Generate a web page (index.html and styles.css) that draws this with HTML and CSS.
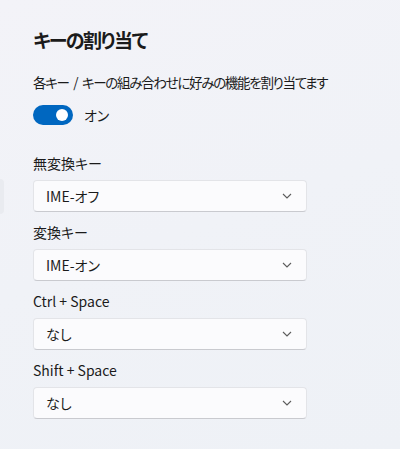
FILE: index.html
```html
<!DOCTYPE html>
<html lang="ja">
<head>
<meta charset="utf-8">
<link rel="stylesheet" href="styles.css">
</head>
<body>
<div class="nav-edge"></div>
<main class="page">
  <h1 class="title">キーの割り当て</h1>
  <p class="desc">各キー / キーの組み合わせに好みの機能を割り当てます</p>
  <div class="toggle-row">
    <span class="toggle"><span class="knob"></span></span>
    <span class="toggle-label">オン</span>
  </div>
  <div class="fields">
    <div class="field">
      <div class="label">無変換キー</div>
      <div class="combo"><span>IME-オフ</span><svg class="chev" width="10" height="6" viewBox="0 0 10 6"><path d="M1 1 L5 5 L9 1" fill="none" stroke="#5c5c5c" stroke-width="1.1"/></svg></div>
    </div>
    <div class="field">
      <div class="label">変換キー</div>
      <div class="combo"><span>IME-オン</span><svg class="chev" width="10" height="6" viewBox="0 0 10 6"><path d="M1 1 L5 5 L9 1" fill="none" stroke="#5c5c5c" stroke-width="1.1"/></svg></div>
    </div>
    <div class="field">
      <div class="label">Ctrl + Space</div>
      <div class="combo"><span>なし</span><svg class="chev" width="10" height="6" viewBox="0 0 10 6"><path d="M1 1 L5 5 L9 1" fill="none" stroke="#5c5c5c" stroke-width="1.1"/></svg></div>
    </div>
    <div class="field">
      <div class="label">Shift + Space</div>
      <div class="combo"><span>なし</span><svg class="chev" width="10" height="6" viewBox="0 0 10 6"><path d="M1 1 L5 5 L9 1" fill="none" stroke="#5c5c5c" stroke-width="1.1"/></svg></div>
    </div>
  </div>
</main>
</body>
</html>
```
FILE: styles.css
```css
html, body {
  margin: 0;
  height: 100%;
}
body {
  background: linear-gradient(160deg, #f3f3f8 0%, #f0f2f7 50%, #eef1f6 100%);
  font-family: "Noto Sans CJK JP", "Noto Sans", sans-serif;
  font-feature-settings: "palt";
  color: #1b1b1b;
  position: relative;
  overflow: hidden;
}
.nav-edge {
  position: absolute;
  left: -6px;
  top: 179px;
  width: 10px;
  height: 35px;
  border-radius: 4px;
  background: #e9ebf0;
}
.page {
  padding: 26px 0 0 33px;
}
.title {
  margin: 0;
  font-size: 19px;
  line-height: 28px;
  font-weight: 700;
  letter-spacing: -1.5px;
}
.desc {
  margin: 18px 0 0;
  font-size: 13.5px;
  line-height: 20px;
  letter-spacing: -1.3px;
  word-spacing: 3px;
}
.toggle-row {
  margin-top: 13px;
  display: flex;
  align-items: center;
  height: 20px;
}
.toggle {
  width: 40px;
  height: 20px;
  border-radius: 10px;
  background: #0067c0;
  display: flex;
  align-items: center;
  justify-content: flex-end;
  padding-right: 5px;
  box-sizing: border-box;
}
.knob {
  width: 12px;
  height: 12px;
  border-radius: 50%;
  background: #fff;
}
.toggle-label {
  margin-left: 11px;
  font-size: 14px;
  line-height: 20px;
}
.fields {
  margin-top: 28px;
  display: flex;
  flex-direction: column;
  gap: 10px;
}
.label {
  font-size: 14px;
  line-height: 20px;
}
.combo {
  margin-top: 7px;
  width: 274px;
  height: 32px;
  box-sizing: border-box;
  background: #fbfbfd;
  border: 1px solid #e3e4e8;
  border-bottom-color: #c9cacf;
  border-radius: 4px;
  display: flex;
  align-items: center;
  justify-content: space-between;
  padding: 0 14px 0 12px;
  font-size: 14px;
}
.chev {
  display: block;
}
```
